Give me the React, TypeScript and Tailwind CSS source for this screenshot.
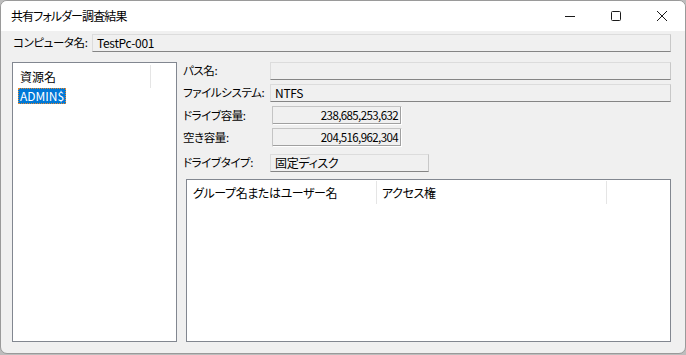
import type { ReactNode } from 'react';

const jp = "font-['Noto_Sans_CJK_JP','Noto_Sans',sans-serif] [font-feature-settings:'palt']";

function EditBox({ className = '', children }: { className?: string; children?: ReactNode }) {
  return (
    <div
      className={`h-[18px] flex items-center px-[4px] bg-[#f0f0f0] border border-[#dcdcdc] border-b-[#858585] border-r-[#c8c8c8] text-[12px] tracking-[-0.3px] leading-none text-black whitespace-nowrap ${className}`}
    >
      {children}
    </div>
  );
}

function NumBox({ children }: { children: ReactNode }) {
  return (
    <div className="w-[130px] h-[19px] flex items-center justify-end pr-[3px] bg-[#f0f0f0] border border-[#c4c4c4] border-r-[#ffffff] border-b-[#ffffff] shadow-[inset_-1px_-1px_0_#a0a0a0] text-[11.5px] tracking-[-0.6px] leading-none text-black">
      {children}
    </div>
  );
}

function Row({ label, labelW = 'w-[87px]', children, className = '' }: { label: string; labelW?: string; children: ReactNode; className?: string }) {
  return (
    <div className={`flex items-center ${className}`}>
      <span className={`${labelW} shrink-0 whitespace-nowrap text-[11.5px] tracking-[-0.4px] leading-none text-black`}>{label}</span>
      {children}
    </div>
  );
}

export default function App() {
  return (
    <div className={`w-[686px] h-[355px] bg-[#bdbdbd] overflow-hidden ${jp}`}>
      <div className="w-[686px] h-[354px] flex flex-col bg-[#f0f0f0] border border-[#9a9a9a] rounded-[7px] overflow-hidden">
        {/* title bar */}
        <div className="h-[30px] shrink-0 bg-white flex items-center">
          <span className="pl-[10px] text-[12px] tracking-[-0.9px] text-black flex-1">共有フォルダー調査結果</span>
          <div className="flex h-full">
            <div className="w-[46px] h-full flex items-center justify-center">
              <svg width="12" height="12" viewBox="0 0 12 12"><path d="M1 6.5h10" stroke="#1a1a1a" strokeWidth="1" /></svg>
            </div>
            <div className="w-[46px] h-full flex items-center justify-center">
              <svg width="12" height="12" viewBox="0 0 12 12"><rect x="1.5" y="1.5" width="9" height="9" rx="1" fill="none" stroke="#1a1a1a" strokeWidth="1" /></svg>
            </div>
            <div className="w-[46px] h-full flex items-center justify-center">
              <svg width="12" height="12" viewBox="0 0 12 12"><path d="M1 1l10 10M11 1L1 11" stroke="#1a1a1a" strokeWidth="1" /></svg>
            </div>
          </div>
        </div>

        {/* client */}
        <div className="flex-1 flex flex-col pl-[11px] pr-[14px] pt-[3px] pb-[11px]">
          <div className="flex items-center">
            <span className="w-[80px] pl-[1px] shrink-0 whitespace-nowrap text-[11.5px] tracking-[-0.4px] leading-none text-black">コンピュータ名:</span>
            <EditBox className="flex-1">TestPc-001</EditBox>
          </div>

          <div className="flex-1 flex mt-[10px] gap-[6px]">
            {/* resource list */}
            <div className="w-[165px] shrink-0 bg-white border border-[#828790] pt-[2px] pl-[5px]">
              <div className="flex h-[23px]">
                <div className="w-[133px] flex items-center pl-[2px] border-r border-[#e5e5e5] text-[12px] text-black">資源名</div>
              </div>
              <div className="flex">
                <span className="h-[16px] px-[2px] flex items-center bg-[#0078d7] text-white text-[12px] outline outline-1 outline-dotted outline-[#e3892f] -outline-offset-1">ADMIN$</span>
              </div>
            </div>

            {/* details */}
            <div className="flex-1 flex flex-col">
              <Row label="パス名:">
                <EditBox className="flex-1" />
              </Row>
              <Row label="ファイルシステム:" className="mt-[4px]">
                <EditBox className="flex-1">NTFS</EditBox>
              </Row>
              <Row label="ドライブ容量:" labelW="w-[89px]" className="mt-[4px]">
                <NumBox>238,685,253,632</NumBox>
              </Row>
              <Row label="空き容量:" labelW="w-[89px]" className="mt-[3px]">
                <NumBox>204,516,962,304</NumBox>
              </Row>
              <Row label="ドライブタイプ:" className="mt-[7px]">
                <EditBox className="w-[159px]">固定ディスク</EditBox>
              </Row>

              <div className="flex-1 mt-[7px] ml-[3px] bg-white border border-[#828790] pt-[1px]">
                <div className="flex h-[23px] text-[12px] tracking-[-0.4px] text-black whitespace-nowrap">
                  <div className="w-[190px] flex items-center pl-[6px] border-r border-[#e5e5e5]">グループ名またはユーザー名</div>
                  <div className="w-[230px] flex items-center pl-[5px] border-r border-[#e5e5e5]">アクセス権</div>
                </div>
              </div>
            </div>
          </div>
        </div>
      </div>
    </div>
  );
}
